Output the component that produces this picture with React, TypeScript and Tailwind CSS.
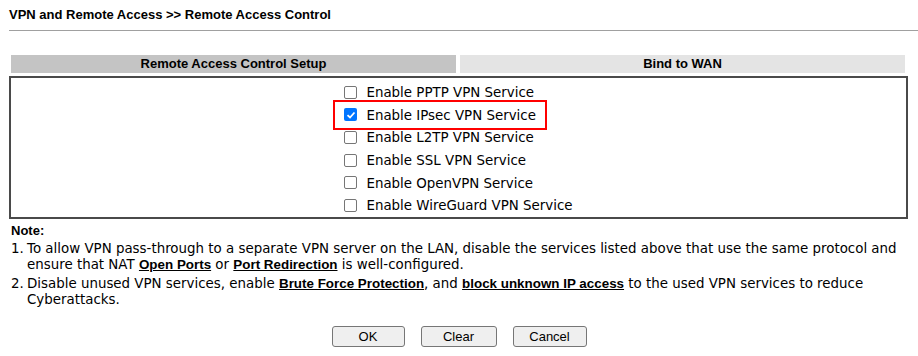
import React from 'react'

const services = [
  { label: 'Enable PPTP VPN Service', checked: false },
  { label: 'Enable IPsec VPN Service', checked: true },
  { label: 'Enable L2TP VPN Service', checked: false },
  { label: 'Enable SSL VPN Service', checked: false },
  { label: 'Enable OpenVPN Service', checked: false },
  { label: 'Enable WireGuard VPN Service', checked: false },
]

const arial = { fontFamily: '"Liberation Sans", Arial, sans-serif' }
const verdana = { fontFamily: '"DejaVu Sans", Verdana, sans-serif' }

function Box({ checked }: { checked: boolean }) {
  if (checked) {
    return (
      <span className="w-[13px] h-[13px] rounded-[2px] bg-[#0075ff] flex items-center justify-center shrink-0">
        <svg width="10" height="10" viewBox="0 0 10 10">
          <path d="M1.5 5.2 L4 7.5 L8.5 2.5" fill="none" stroke="#fff" strokeWidth="1.8" />
        </svg>
      </span>
    )
  }
  return <span className="w-[13px] h-[13px] rounded-[2px] border border-[#767676] bg-white shrink-0" />
}

function Btn({ children, w }: { children: React.ReactNode; w: string }) {
  return (
    <button className={`${w} h-[21px] bg-[#efefef] border border-[#767676] rounded-[3px] text-[13px] text-black leading-none`}>
      {children}
    </button>
  )
}

function Link({ children }: { children: React.ReactNode }) {
  return (
    <u className="font-bold" style={arial}>
      {children}
    </u>
  )
}

export default function App() {
  return (
    <div className="w-[918px] h-[356px] bg-white text-black overflow-hidden" style={arial}>
      <div className="px-[9px] pt-[7px] text-[13px] font-bold leading-[16px]">
        VPN and Remote Access &gt;&gt; Remote Access Control
      </div>
      <div className="ml-[9px] mt-[7px] h-px bg-[#a0a0a0]" />

      <div className="mx-[9px] mt-[24px] w-[899px]">
        {/* header row */}
        <div className="flex gap-[4px] px-[2px] h-[18px] text-[13px] font-bold leading-[18px]">
          <div className="w-[445px] bg-[#c4c4c4] text-center">Remote Access Control Setup</div>
          <div className="w-[445px] bg-[#e4e4e4] text-center">Bind to WAN</div>
        </div>

        {/* services box */}
        <div className="mt-[3px] h-[143px] border-2 border-[#4a4a4a] flex justify-center pt-[3px]" style={verdana}>
          <div className="flex flex-col">
            {services.map((s) => (
              <div
                key={s.label}
                className={`flex items-center gap-[9px] text-[13.4px] ${
                  s.checked
                    ? 'self-start border-2 border-[#ff0000] -ml-[11px] px-[9px] h-[31px] -my-[4px] relative'
                    : 'h-[23px]'
                }`}
              >
                <Box checked={s.checked} />
                <span className="leading-none pt-[1px]">{s.label}</span>
              </div>
            ))}
          </div>
        </div>
      </div>

      {/* notes */}
      <div className="px-[11px] mt-[4px] text-[13.4px] leading-[16px]" style={verdana}>
        <div className="font-bold text-[13px]" style={arial}>Note:</div>
        <div className="flex mt-[2px]">
          <span className="w-[16px] shrink-0">1.</span>
          <span>
            To allow VPN pass-through to a separate VPN server on the LAN, disable the services listed above that use the same protocol and ensure that NAT{' '}
            <Link>Open Ports</Link> or <Link>Port Redirection</Link> is well-configured.
          </span>
        </div>
        <div className="flex mt-[3px]">
          <span className="w-[16px] shrink-0">2.</span>
          <span>
            Disable unused VPN services, enable <Link>Brute Force Protection</Link>, and{' '}
            <Link>block unknown IP access</Link> to the used VPN services to reduce Cyberattacks.
          </span>
        </div>
      </div>

      <div className="flex justify-center gap-[16px] mt-[18px]">
        <Btn w="w-[73px]">OK</Btn>
        <Btn w="w-[76px]">Clear</Btn>
        <Btn w="w-[74px]">Cancel</Btn>
      </div>
    </div>
  )
}
